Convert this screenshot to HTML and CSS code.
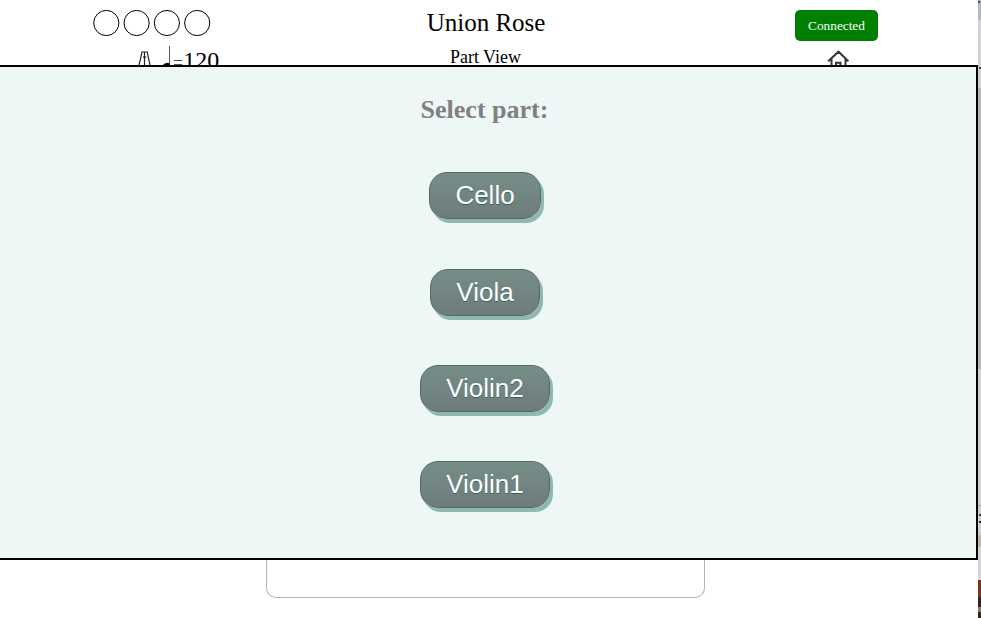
FILE: index.html
```html
<!DOCTYPE html>
<html lang="en">
<head>
<meta charset="utf-8">
<title>Union Rose</title>
<link rel="stylesheet" href="styles.css">
</head>
<body>
<div class="page">
  <header class="top">
    <div class="meter">
      <svg class="beats" width="122" height="30" viewBox="0 0 122 30" fill="none" stroke="#000" stroke-width="1">
        <circle cx="15.3" cy="15" r="12.6"/><circle cx="45.6" cy="15" r="12.6"/><circle cx="75.9" cy="15" r="12.6"/><circle cx="106.2" cy="15" r="12.6"/>
      </svg>
      <div class="tempo">
        <svg class="metronome" width="16" height="22" viewBox="0 0 16 22" fill="none" stroke="#222" stroke-width="1.2">
          <path d="M1 20 5 2H10.2L14 20ZM7.5 2V20M6 7.2H9.2"/>
        </svg>
        <svg class="note" width="12" height="26" viewBox="0 0 12 26">
          <path d="M8.5 0V19" stroke="#555" fill="none"/><ellipse cx="5.5" cy="20" rx="3.7" ry="2.8" transform="rotate(-20 5 20)"/>
        </svg>
        <span class="equals">=</span><span class="bpm">120</span>
      </div>
    </div>
    <div class="heading">
      <div class="title">Union Rose</div>
      <div class="view">Part View</div>
    </div>
    <div class="status">
      <div class="connected">Connected</div>
      <svg class="home" width="22" height="20" viewBox="0 0 22 20" fill="none" stroke="#333" stroke-width="2">
        <path d="M1.2 11.3 11.5 1.7 21.5 11.3M4.5 9V19M18.5 9V19M9 19V12.8H13.5V19"/>
      </svg>
    </div>
  </header>
  <main class="dialog">
    <h2 class="prompt">Select part:</h2>
    <button class="part">Cello</button>
    <button class="part">Viola</button>
    <button class="part">Violin2</button>
    <button class="part">Violin1</button>
  </main>
  <div class="panel"></div>
</div>
<aside class="edge"><span class="mark-top"></span><span class="mark-mid"></span><span class="mark-low"></span></aside>
</body>
</html>
```
FILE: styles.css
```css
* { box-sizing: border-box; }
body {
  margin: 0;
  display: flex;
  width: 981px;
  height: 618px;
  overflow: hidden;
  background: #fff;
  color: #000;
  font-family: "Liberation Serif", serif;
}
.page { width: 978px; flex: none; display: flex; flex-direction: column; }
.top {
  height: 65px;
  flex: none;
  overflow: hidden;
  display: grid;
  grid-template-columns: 302px 367px 309px;
}
.meter { padding: 8px 0 0 91px; }
.beats { display: block; }
.tempo { display: flex; align-items: flex-start; padding: 8px 0 0 46px; }
.metronome { margin-top: 4px; }
.note { margin-left: 8px; flex: none; }
.equals { font-size: 18px; line-height: 20px; margin-top: 7px; color: #555; }
.bpm { font-size: 24px; line-height: 28px; }
.heading { text-align: center; }
.title { font-size: 25px; line-height: 30px; padding: 8px 0 0 1px; }
.view { font-size: 18px; line-height: 20px; margin-top: 9px; }
.status { padding: 10px 0 0 126px; }
.connected {
  width: 83px;
  height: 31px;
  border-radius: 5px;
  background: #008000;
  color: #fff;
  font-size: 13.3px;
  line-height: 31px;
  text-align: center;
}
.home { display: block; margin: 9px 0 0 32px; }
.dialog {
  height: 495px;
  flex: none;
  margin-left: -7px;
  border: 2px solid #000;
  background: #edf7f6;
  display: flex;
  flex-direction: column;
  align-items: center;
}
.prompt { margin: 26px 0 0 -2px; height: 79px; color: #808080; font-size: 26px; line-height: 34px; }
.part {
  height: 47px;
  flex: none;
  margin: 0 1px 49.4px 0;
  padding: 0 25.5px;
  border: 1px solid #566963;
  border-radius: 18px;
  background: linear-gradient(#768d87 5%, #6c7c7c 100%);
  box-shadow: 3px 4px 0 #8fb8b4;
  color: #fff;
  font: 26px "Liberation Sans", Arial, sans-serif;
  text-shadow: 0 1px 0 #2b665e;
}
.part:nth-of-type(1) { margin-bottom: 50px; }
.part:nth-of-type(2),
.part:nth-of-type(3) { margin-bottom: 49px; }
.panel {
  width: 439px;
  height: 38px;
  margin-left: 266px;
  border: 1px solid #b4b4b4;
  border-top: 0;
  border-radius: 0 0 10px 10px;
}
.edge {
  width: 3px;
  height: 618px;
  flex: none;
  position: relative;
  background: linear-gradient(#b4b7bd 0 20px, #d2d2d4 20px 88px, #b7b7b7 88px 369px, #d3d3d3 369px 505px, #999 505px 506px, #d0d0d0 506px 535px, #bdb8b2 535px 547px, #d3d3d8 547px 580px, #81301f 580px 597px, #38211c 597px 607px, #8c7b73 607px 612px, #35201d 612px);
}
.edge span { position: absolute; background: #444; width: 2px; height: 2px; }
.mark-top { left: 0; top: 1px; }
.mark-mid { left: 1px; top: 67px; }
.mark-low { left: 1px; top: 514px; box-shadow: 0 7px #333; }
```
